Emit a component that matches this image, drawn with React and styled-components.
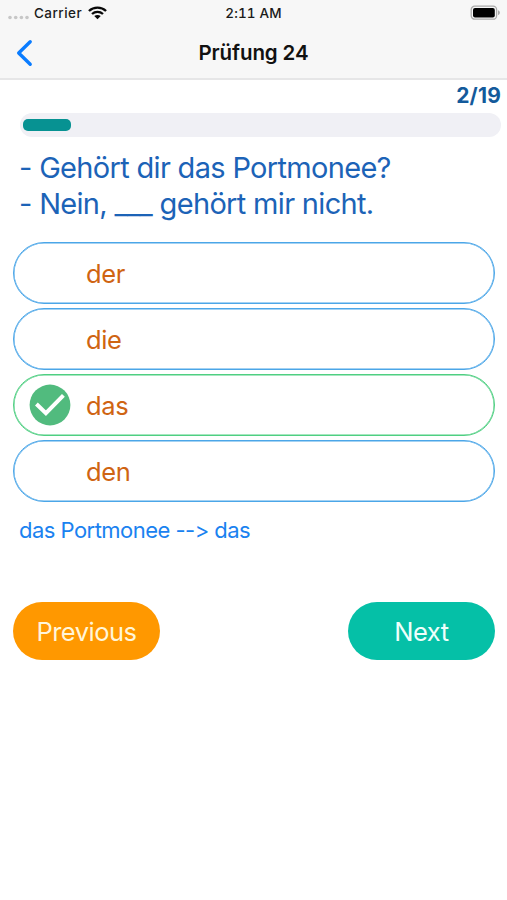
import React from "react";
import styled, { createGlobalStyle } from "styled-components";

const GlobalStyle = createGlobalStyle`
  *, *::before, *::after { box-sizing: border-box; }
  body { margin: 0; background: #fff; }
  button { font: inherit; border: 0; padding: 0; background: none; }
`;

const Screen = styled.main`
  width: 507px;
  height: 900px;
  overflow: hidden;
  background: #fff;
  font-family: Inter, "Liberation Sans", sans-serif;
`;

const Header = styled.header`
  height: 80px;
  background: #f7f7f7;
  border-bottom: 2px solid #e6e6e7;
`;

const StatusBar = styled.div`
  height: 26px;
  display: grid;
  grid-template-columns: 1fr auto 1fr;
  align-items: center;
  padding: 0 6px 0 8px;
  font-size: 13.5px;
  font-weight: 500;
  color: #1b1b1b;
`;

const Carrier = styled.div`
  display: flex;
  align-items: center;
`;

const Signal = styled.svg`
  margin: 8px 5px 0 0;
`;

const CarrierName = styled.span`
  letter-spacing: 0.45px;
  margin-right: 6px;
`;

const Clock = styled.span`
  margin-right: 2px;
  font-feature-settings: "tnum";
  letter-spacing: 0.15px;
`;

const Battery = styled.svg`
  justify-self: end;
`;

const NavBar = styled.nav`
  height: 52px;
  display: grid;
  grid-template-columns: 60px 1fr 60px;
  align-items: center;
`;

const BackButton = styled.button`
  display: flex;
  padding: 1px 0 0 16px;
`;

const Title = styled.h1`
  margin: 0;
  padding-top: 1px;
  text-align: center;
  font-size: 20.5px;
  line-height: 26px;
  font-weight: 600;
  letter-spacing: -0.1px;
  color: #111;
`;

const Counter = styled.div`
  height: 33px;
  padding-right: 6px;
  text-align: right;
  font-size: 21px;
  line-height: 32px;
  font-weight: 700;
  letter-spacing: 0.2px;
  color: #135a9b;
`;

const Track = styled.div`
  height: 24px;
  margin: 0 6px 0 20px;
  padding: 6px 3px;
  border-radius: 12px;
  background: #f0f0f5;
`;

const Fill = styled.div`
  width: 48px;
  height: 12px;
  border-radius: 5px;
  background: #079292;
`;

const Question = styled.p`
  height: 105px;
  margin: 0;
  padding: 13px 19px 0;
  font-size: 29px;
  line-height: 36px;
  letter-spacing: -0.68px;
  color: #1c63b7;
  white-space: pre;
`;

const Options = styled.div`
  display: grid;
  gap: 4px;
  padding: 0 12px 0 13px;
`;

const Option = styled.button`
  display: grid;
  grid-template-columns: 72px 1fr;
  align-items: center;
  height: 62px;
  border: 1px solid ${(p) => (p.$correct ? "#4fcf82" : "#4ba6e8")};
  box-shadow: inset 0 0 0 0.5px ${(p) => (p.$correct ? "#4fcf82" : "#4ba6e8")};
  border-radius: 31px;
  text-align: left;
  font-size: 25.5px;
  letter-spacing: -0.4px;
  color: #cf6412;
`;

const Mark = styled.span`
  display: flex;
  padding-left: 15px;
`;

const Explanation = styled.p`
  margin: 0;
  height: 100px;
  padding: 13px 19px 0;
  font-size: 22px;
  line-height: 30px;
  letter-spacing: -0.53px;
  color: #1a82f0;
`;

const Actions = styled.div`
  display: flex;
  justify-content: space-between;
  padding: 0 12px 0 13px;
`;

const ActionButton = styled.button`
  width: 147px;
  height: 58px;
  border-radius: 29px;
  background: ${(p) => (p.$primary ? "#05c0a7" : "#ff9800")};
  color: ${(p) => (p.$primary ? "#effffb" : "#fff5d9")};
  font-size: 25.5px;
  letter-spacing: -0.5px;
`;

const answers = ["der", "die", "das", "den"];

function WifiIcon() {
  return (
    <svg width="19" height="14" viewBox="0 0 18 14" preserveAspectRatio="none">
      <g fill="none" stroke="#090909" strokeWidth="2.2">
        <path d="M0.9 5C5.4 0.6 12.6 0.6 17.1 5" />
        <path d="M3.8 8C6.8 5.1 11.2 5.1 14.2 8" />
      </g>
      <path d="M5.9 10.1C7.7 8.5 10.3 8.5 12.1 10.1L9 13.3Z" fill="#090909" />
    </svg>
  );
}

function CheckIcon() {
  return (
    <svg width="42" height="42" viewBox="0 0 42 42">
      <circle cx="21" cy="21" r="20.4" fill="#51bb7e" />
      <path d="M7.4 20L16.9 29.2L34.4 11.4" fill="none" stroke="#fff" strokeWidth="4" />
    </svg>
  );
}

export default function App() {
  return (
    <Screen>
      <GlobalStyle />
      <Header>
        <StatusBar>
          <Carrier>
            <Signal width="21" height="5" viewBox="0 0 21 5" fill="#c7c7c7">
              <circle cx="2" cy="2.5" r="1.8" />
              <circle cx="7.7" cy="2.5" r="1.8" />
              <circle cx="13.4" cy="2.5" r="1.8" />
              <circle cx="19" cy="2.5" r="1.8" />
            </Signal>
            <CarrierName>Carrier</CarrierName>
            <WifiIcon />
          </Carrier>
          <Clock>2:11 AM</Clock>
          <Battery width="31" height="16" viewBox="0 0 31 16">
            <rect x="1.2" y="1.2" width="25.4" height="13" rx="3.5" fill="#f7f7f7" stroke="#aaa" strokeWidth="1.3" />
            <rect x="3" y="3" width="21.8" height="9.4" rx="2" fill="#000" />
            <path d="M28 5.2C30.5 6 30.5 9.2 28 10Z" fill="#aaa" />
          </Battery>
        </StatusBar>
        <NavBar>
          <BackButton aria-label="Back">
            <svg width="18" height="28" viewBox="0 0 18 28">
              <path d="M14.2 2.8L2.7 14L14.2 25.2" fill="none" stroke="#0a7cff" strokeWidth="3.4" strokeLinecap="round" strokeLinejoin="round" />
            </svg>
          </BackButton>
          <Title>Prüfung 24</Title>
        </NavBar>
      </Header>
      <Counter>2/19</Counter>
      <Track>
        <Fill />
      </Track>
      <Question>{"- Gehört dir das Portmonee?\n- Nein, ___ gehört mir nicht."}</Question>
      <Options>
        {answers.map((answer) => (
          <Option key={answer} $correct={answer === "das"}>
            <Mark>{answer === "das" && <CheckIcon />}</Mark>
            <span>{answer}</span>
          </Option>
        ))}
      </Options>
      <Explanation>das Portmonee --&gt; das</Explanation>
      <Actions>
        <ActionButton>Previous</ActionButton>
        <ActionButton $primary>Next</ActionButton>
      </Actions>
    </Screen>
  );
}
